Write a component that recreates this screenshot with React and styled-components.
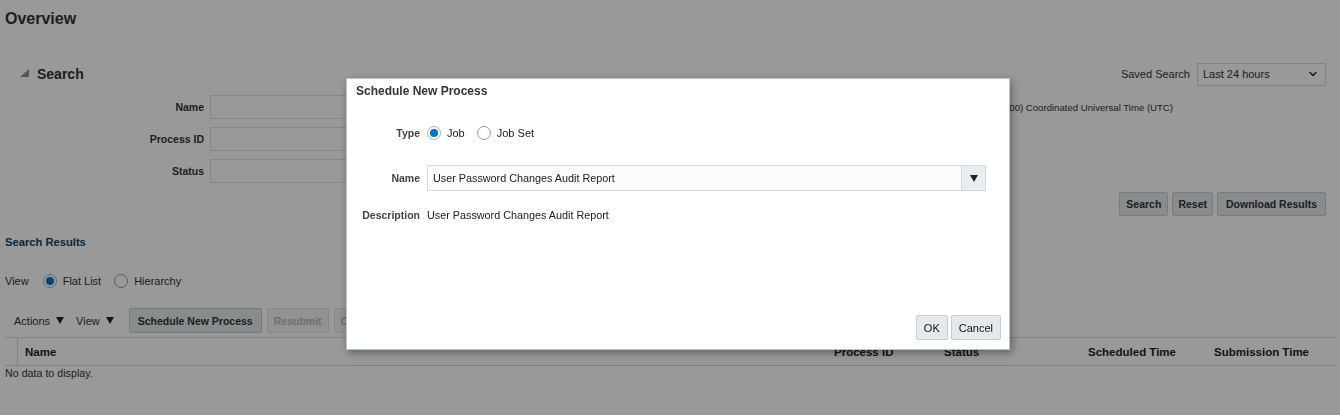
import React from 'react';
import styled, { createGlobalStyle } from 'styled-components';
import { ChevronDown } from 'lucide-react';

const GlobalStyle = createGlobalStyle`
  html, body {
    margin: 0;
    padding: 0;
    background: #fff;
  }
  body {
    font-family: "Liberation Sans", Arial, sans-serif;
    color: #333;
    width: 1340px;
    height: 415px;
    overflow: hidden;
  }
  * { box-sizing: border-box; }
`;

const Page = styled.div`
  position: relative;
  height: 415px;
  padding: 9px 4px 0 5px;
`;

const Title = styled.h1`
  margin: 0;
  font-size: 16px;
  line-height: 20px;
  font-weight: bold;
  color: #333;
`;

const SearchPanel = styled.section`
  margin-top: 33px;
  padding-right: 10px;
`;

const SearchHeader = styled.div`
  display: flex;
  align-items: center;
  justify-content: space-between;
  height: 24px;
  padding-left: 15px;
`;

const Disclosure = styled.div`
  display: flex;
  align-items: center;
  gap: 8px;
  font-size: 14px;
  font-weight: bold;
  color: #333;
`;

const DisclosureIcon = styled.span`
  width: 0;
  height: 0;
  border-left: 9px solid transparent;
  border-bottom: 8px solid #8e8e8e;
  margin-top: -3px;
`;

const SavedSearch = styled.div`
  display: flex;
  align-items: center;
  gap: 7px;
  font-size: 11px;
  color: #333;
`;

const SelectBox = styled.div`
  width: 129px;
  height: 23px;
  border: 1px solid #d6dbdf;
  background: #fff;
  display: flex;
  align-items: center;
  justify-content: space-between;
  padding: 0 6px 0 5px;
  font-size: 11px;
  color: #333;
`;

const FormGrid = styled.div`
  display: grid;
  grid-template-columns: 199px 260px 1fr;
  grid-auto-rows: 24px;
  column-gap: 6px;
  row-gap: 8px;
  margin-top: 9px;
  align-items: center;
`;

const FieldLabel = styled.label`
  grid-column: 1;
  text-align: right;
  font-size: 10.5px;
  font-weight: bold;
  color: #333;
`;

const TextInput = styled.div`
  grid-column: 2;
  height: 24px;
  border: 1px solid #dbe0e4;
  background: #fcfdfe;
`;

const TimeZone = styled.div`
  grid-column: 3;
  grid-row: 1;
  justify-self: end;
  margin-right: 153px;
  font-size: 9.6px;
  color: #333;
  white-space: nowrap;
`;

const ButtonRow = styled.div`
  display: flex;
  justify-content: flex-end;
  gap: 4px;
  margin-top: 9px;
`;

const Button = styled.button`
  height: ${(p) => (p.$tall ? 25 : 24)}px;
  padding: 0 ${(p) => p.$pad || 6}px;
  border: 1px solid ${(p) => (p.disabled ? '#dde3e8' : '#c4ced7')};
  border-radius: 2px;
  background: ${(p) => (p.disabled ? '#f1f3f5' : '#e5e9ec')};
  font-family: inherit;
  font-size: ${(p) => (p.$light ? 11 : 10.5)}px;
  font-weight: ${(p) => (p.$light ? 'normal' : 'bold')};
  color: ${(p) => (p.disabled ? '#b5b9bc' : p.$light ? '#111' : '#333')};
  white-space: nowrap;
  cursor: default;
`;

const SectionTitle = styled.h2`
  margin: 18px 0 0;
  font-size: 11.2px;
  line-height: 16px;
  font-weight: bold;
  color: #0f4469;
`;

const ViewRow = styled.div`
  display: flex;
  align-items: center;
  height: 16px;
  margin-top: 23px;
  font-size: 11px;
  color: #333;
`;

const RadioOption = styled.span`
  display: flex;
  align-items: center;
  gap: 6px;
  margin-left: ${(p) => p.$offset}px;
  font-size: 11px;
  color: ${(p) => p.$color || '#333'};
`;

const Radio = styled.span`
  width: 14px;
  height: 14px;
  border-radius: 50%;
  border: 1px solid ${(p) => (p.$checked ? '#9fb3c2' : '#959da4')};
  background: #fff;
  display: flex;
  align-items: center;
  justify-content: center;
  &::after {
    content: '';
    width: 8px;
    height: 8px;
    border-radius: 50%;
    background: ${(p) => (p.$checked ? '#0572ce' : 'transparent')};
  }
`;

const Toolbar = styled.div`
  display: flex;
  align-items: center;
  gap: 5px;
  height: 25px;
  margin-top: 19px;
  padding-left: 9px;
`;

const MenuItem = styled.span`
  display: flex;
  align-items: center;
  gap: 6px;
  font-size: 11px;
  color: #333;
  margin-right: ${(p) => p.$space}px;
`;

const Caret = styled.span`
  width: 0;
  height: 0;
  border-left: 4px solid transparent;
  border-right: 4px solid transparent;
  border-top: 7px solid #222;
`;

const TableHead = styled.div`
  display: grid;
  grid-template-columns: 13px 809px 110px 144px 126px 1fr;
  height: 29px;
  margin-top: 4px;
  border-top: 1px solid #d3d6d8;
  border-bottom: 1px solid #d3d6d8;
`;

const HeadCell = styled.div`
  display: flex;
  align-items: center;
  padding-left: 7px;
  font-size: 11.5px;
  font-weight: bold;
  color: #222;
  border-right: ${(p) => (p.$divider ? '1px solid #d3d6d8' : 'none')};
`;

const EmptyText = styled.div`
  font-size: 10.7px;
  line-height: 14px;
  color: #333;
`;

const Overlay = styled.div`
  position: fixed;
  inset: 0;
  background: rgba(0, 0, 0, 0.4);
`;

const Dialog = styled.div`
  position: absolute;
  left: 346px;
  top: 78px;
  width: 664px;
  height: 272px;
  display: flex;
  flex-direction: column;
  background: #fff;
  border: 1px solid #b7c5d0;
  box-shadow: 2px 3px 8px rgba(0, 0, 0, 0.35);
`;

const DialogTitle = styled.div`
  padding: 4px 9px 0;
  font-size: 12px;
  line-height: 16px;
  font-weight: bold;
  color: #333;
`;

const DialogRow = styled.div`
  display: flex;
  align-items: center;
  gap: 7px;
  height: ${(p) => p.$height}px;
  margin-top: ${(p) => p.$gap}px;
  padding-left: 10px;
`;

const DialogLabel = styled.span`
  width: 63px;
  text-align: right;
  font-size: 10.5px;
  font-weight: bold;
  color: #444;
`;

const DialogValue = styled.span`
  font-size: 10.8px;
  color: #222;
`;

const Choices = styled.div`
  display: flex;
  align-items: center;
`;

const NameSelect = styled.div`
  width: 559px;
  height: 26px;
  display: flex;
  border: 1px solid #d3dae0;
  background: #fafcfd;
`;

const NameText = styled.span`
  flex: 1;
  display: flex;
  align-items: center;
  padding-left: 5px;
  font-size: 10.8px;
  color: #222;
`;

const DropButton = styled.span`
  width: 24px;
  display: flex;
  align-items: center;
  justify-content: center;
  border-left: 1px solid #d3dae0;
  background: #e9edf0;
`;

const DialogFooter = styled.div`
  display: flex;
  justify-content: flex-end;
  gap: 3px;
  margin-top: auto;
  padding: 0 8px 9px;
`;

const headers = [
  { label: '', divider: true },
  { label: 'Name' },
  { label: 'Process ID' },
  { label: 'Status' },
  { label: 'Scheduled Time' },
  { label: 'Submission Time' },
];

const App = () => (
  <>
    <GlobalStyle />
    <Page>
      <Title>Overview</Title>

      <SearchPanel>
        <SearchHeader>
          <Disclosure>
            <DisclosureIcon />
            Search
          </Disclosure>
          <SavedSearch>
            Saved Search
            <SelectBox>
              Last 24 hours
              <ChevronDown size={12} strokeWidth={3.2} color="#333" />
            </SelectBox>
          </SavedSearch>
        </SearchHeader>

        <FormGrid>
          <TimeZone>Time Zone (UTC+00:00) Coordinated Universal Time (UTC)</TimeZone>
          <FieldLabel>Name</FieldLabel>
          <TextInput />
          <FieldLabel>Process ID</FieldLabel>
          <TextInput />
          <FieldLabel>Status</FieldLabel>
          <TextInput />
        </FormGrid>

        <ButtonRow>
          <Button>Search</Button>
          <Button $pad={5}>Reset</Button>
          <Button $pad={8}>Download Results</Button>
        </ButtonRow>
      </SearchPanel>

      <SectionTitle>Search Results</SectionTitle>

      <ViewRow>
        View
        <RadioOption $offset={14}>
          <Radio $checked />
          Flat List
        </RadioOption>
        <RadioOption $offset={13}>
          <Radio />
          Hierarchy
        </RadioOption>
      </ViewRow>

      <Toolbar>
        <MenuItem $space={7}>
          Actions <Caret />
        </MenuItem>
        <MenuItem $space={10}>
          View <Caret />
        </MenuItem>
        <Button $tall $pad={8}>Schedule New Process</Button>
        <Button $tall disabled>Resubmit</Button>
        <Button $tall disabled>Cancel Process</Button>
      </Toolbar>

      <TableHead>
        {headers.map((h, i) => (
          <HeadCell key={i} $divider={h.divider}>
            {h.label}
          </HeadCell>
        ))}
      </TableHead>
      <EmptyText>No data to display.</EmptyText>
    </Page>

    <Overlay />

    <Dialog>
      <DialogTitle>Schedule New Process</DialogTitle>
      <DialogRow $height={16} $gap={26}>
        <DialogLabel>Type</DialogLabel>
        <Choices>
          <RadioOption $offset={0} $color="#222">
            <Radio $checked />
            Job
          </RadioOption>
          <RadioOption $offset={12} $color="#222">
            <Radio />
            Job Set
          </RadioOption>
        </Choices>
      </DialogRow>
      <DialogRow $height={26} $gap={24}>
        <DialogLabel>Name</DialogLabel>
        <NameSelect>
          <NameText>User Password Changes Audit Report</NameText>
          <DropButton>
            <Caret />
          </DropButton>
        </NameSelect>
      </DialogRow>
      <DialogRow $height={14} $gap={17}>
        <DialogLabel>Description</DialogLabel>
        <DialogValue>User Password Changes Audit Report</DialogValue>
      </DialogRow>
      <DialogFooter>
        <Button $tall $light $pad={7}>OK</Button>
        <Button $tall $light $pad={7}>Cancel</Button>
      </DialogFooter>
    </Dialog>
  </>
);

export default App;
